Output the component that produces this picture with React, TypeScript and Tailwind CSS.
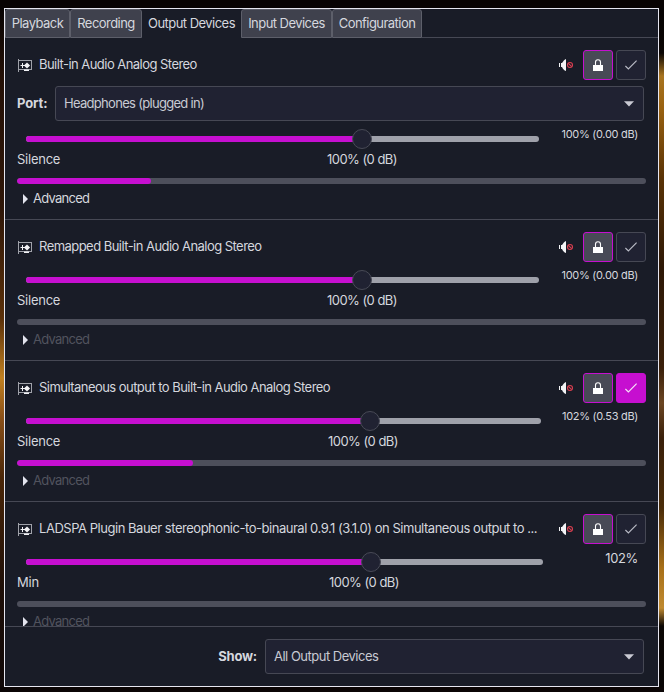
import React from "react";

function CardIcon() {
  return (
    <svg width="14" height="13" viewBox="0 0 14 13" className="block shrink-0">
      <path d="M0 0h1v13h-1zM1 1h13v1h-13zM13 2h1v9h-1zM1 10h12v1h-12z" fill="#a0a2aa" />
      <path d="M6 10.500h5v1.500h-5z" fill="#f0f0f4" />
      <path d="M2.500 6h5v1h-5zM4 4h1v5h-1z" fill="#f2f2f5" />
      <path d="M9 3.400l3.100 3.100l-3.100 3.100l-3.100 -3.100z" fill="#f2f2f5" />
    </svg>
  );
}

function MutedIcon() {
  return (
    <svg width="15" height="13" viewBox="0 0 15 13" className="block shrink-0">
      <path d="M0 4h1v4h-1zM2 4h1C4 2.500 5 1 7 0v12C5 11.500 4 10 3 8h-1z" fill="#f3f3f5" />
      <circle cx="11" cy="6" r="2.500" fill="none" stroke="#d93f50" strokeWidth="1.100" />
      <path d="M9.300 4.300l3.400 3.400" stroke="#d93f50" strokeWidth="1.100" />
    </svg>
  );
}

function LockIcon() {
  return (
    <svg width="10" height="12" viewBox="0 0 10 12">
      <path d="M0 6h10v6h-10z" fill="#fff" />
      <path d="M2.500 6.500V3.300a2.500 2.500 0 0 1 5 0V6.500" fill="none" stroke="#fff" strokeWidth="1.100" />
    </svg>
  );
}

function CheckIcon({ active }: { active?: boolean }) {
  return (
    <svg width="12" height="10" viewBox="0 0 12 10">
      <path d="M0.400 6l3 3L11.600 0.600" fill="none" stroke={active ? "#f6e5f8" : "#b9bbc6"} strokeWidth="1.150" />
    </svg>
  );
}

function DownArrow() {
  return (
    <svg width="10" height="6" viewBox="0 0 10 6">
      <path d="M0 0.300h10L5 5.500z" fill="#c9cad3" />
    </svg>
  );
}

function Select({ value, className }: { value: string; className: string }) {
  return (
    <div className={"flex h-[35px] items-center justify-between rounded-[3px] border border-[#464854] bg-[#202232] pr-[9px] pl-2 text-[#c8cad3] " + className}>
      <span>{value}</span>
      <DownArrow />
    </div>
  );
}

type Device = {
  name: string;
  port?: string;
  low: string;
  volume: string;
  largeVolume?: boolean;
  track: number;
  knob: number;
  level: number;
  isDefault?: boolean;
  enabled?: boolean;
};

const devices: Device[] = [
  { name: "Built-in Audio Analog Stereo", port: "Headphones (plugged in)", low: "Silence", volume: "100% (0.00 dB)", track: 513, knob: 336, level: 134, enabled: true },
  { name: "Remapped Built-in Audio Analog Stereo", low: "Silence", volume: "100% (0.00 dB)", track: 513, knob: 336, level: 0 },
  { name: "Simultaneous output to Built-in Audio Analog Stereo", low: "Silence", volume: "102% (0.53 dB)", track: 515, knob: 344, level: 176, isDefault: true },
  { name: "LADSPA Plugin Bauer stereophonic-to-binaural 0.9.1 (3.1.0) on Simultaneous output to ...", low: "Min", volume: "102%", largeVolume: true, track: 517, knob: 345, level: 0 },
];

function DeviceRow({ d }: { d: Device }) {
  return (
    <section className="shrink-0 border-b border-[#464854] px-3 pt-3 pb-[10px]">
      <header className="flex h-[30px] items-center">
        <div className="mt-px ml-px"><CardIcon /></div>
        <h2 className={"ml-[7px] w-[499px] whitespace-nowrap " + (d.largeVolume ? "tracking-[-0.47px]" : "")}>{d.name}</h2>
        <div className="mt-px ml-[21px]"><MutedIcon /></div>
        <button className="ml-[9px] flex size-[30px] items-center justify-center rounded-[3px] border border-[#c60fd0] bg-[#484a56]">
          <LockIcon />
        </button>
        <button className={"ml-[3px] flex size-[30px] items-center justify-center rounded-[3px] border " + (d.isDefault ? "border-[#c60fd0] bg-[#c60fd0]" : "border-[#464854] bg-[#202232]")}>
          <CheckIcon active={d.isDefault} />
        </button>
      </header>
      {d.port && (
        <div className="mt-[6px] flex h-[35px] items-center">
          <span className="w-[38px] font-bold tracking-[-0.1px]">Port:</span>
          <Select value={d.port} className="w-[589px] tracking-[-0.7px]" />
        </div>
      )}
      <div className="flex h-9 justify-between pr-2">
        <div className="relative pt-[15px] pl-[9px]">
          <div className="h-[6px] overflow-hidden rounded-full bg-[#9fa1aa]" style={{ width: d.track }}>
            <div className="h-full bg-[#c60fd0]" style={{ width: d.knob }} />
          </div>
          <div className="absolute top-2 size-5 rounded-full border border-[#484a56] bg-[#202232]" style={{ left: d.knob - 1 }} />
          <div className="-ml-[9px] flex pt-[8px] leading-[18px]">
            <span className="w-[310px] tracking-[-0.25px]">{d.low}</span>
            <span style={{ marginLeft: (d.track - 513) / 2 }}>100% (0 dB)</span>
          </div>
        </div>
        <span className={d.largeVolume ? "pt-[5px] leading-[18px] tracking-[-0.35px]" : "pt-[4px] text-[11px] leading-[18px] tracking-[-0.3px]"}>{d.volume}</span>
      </div>
      <div className="mt-[21px] h-[6px] overflow-hidden rounded-full bg-[#4d4f5b]">
        <div className="h-full rounded-full bg-[#c60fd0]" style={{ width: d.level }} />
      </div>
      <div className={"mt-[5px] flex h-5 items-center pl-[6px] tracking-[-0.75px] " + (d.enabled ? "" : "text-[#51535e]")}>
        <svg width="5" height="10" viewBox="0 0 5 10"><path d="M0 0l5 5-5 5z" fill="#e3e4ee" /></svg>
        <span className="ml-[5px]">Advanced</span>
      </div>
    </section>
  );
}

const tabs = [
  { name: "Playback", width: "w-[65px]" },
  { name: "Recording", width: "w-[72px]" },
  { name: "Output Devices", width: "w-[99px]" },
  { name: "Input Devices", width: "w-[91px]" },
  { name: "Configuration", width: "w-[90px]" },
];

export default function App() {
  return (
    <main className="h-[692px] w-[664px] bg-[#0b0505] font-['Inter','Noto_Sans',sans-serif] text-[13px] tracking-[-0.54px] text-[#d5d7de]">
      <div className="h-2 bg-[#080303]" />
      <div className="flex h-[679px]">
        <div className="w-1 bg-[linear-gradient(to_bottom,#080404_0px,#241006_70px,#2e1608_200px,#5a3009_310px,#c08020_370px,#8a5018_410px,#4a2608_470px,#1e0f08_580px,#100808_679px)]" />
        <div className="flex h-[679px] w-[655px] flex-col border border-[#e6e6f0] bg-[#191c27]">
          <nav className="flex h-[29px] shrink-0">
            {tabs.map((t) => (
              <div
                key={t.name}
                className={"flex items-center justify-center " + t.width + (t.name === "Output Devices" ? "" : " rounded-t-[3px] border border-[#5d5f6a] bg-[#3f414d]")}
              >
                {t.name}
              </div>
            ))}
            <div className="grow border-b border-[#464854]" />
          </nav>
          <div className="flex h-[588px] shrink-0 flex-col overflow-hidden">
            {devices.map((d) => <DeviceRow key={d.name} d={d} />)}
          </div>
          <footer className="flex grow items-center justify-end border-t border-[#464854] pr-[14px]">
            <span className="mr-2 font-bold tracking-[-0.2px]">Show:</span>
            <Select value="All Output Devices" className="w-[379px] tracking-[-0.5px]" />
          </footer>
        </div>
        <div className="grow bg-[linear-gradient(to_bottom,#060303_0px,#0b0604_45px,#a87420_68px,#9a6210_100px,#5a3306_170px,#2e1806_260px,#3a200a_360px,#6b4522_395px,#3a200a_430px,#4a2c08_500px,#a87018_560px,#c08a30_600px,#0c0705_618px,#080505_679px)]" />
      </div>
    </main>
  );
}
